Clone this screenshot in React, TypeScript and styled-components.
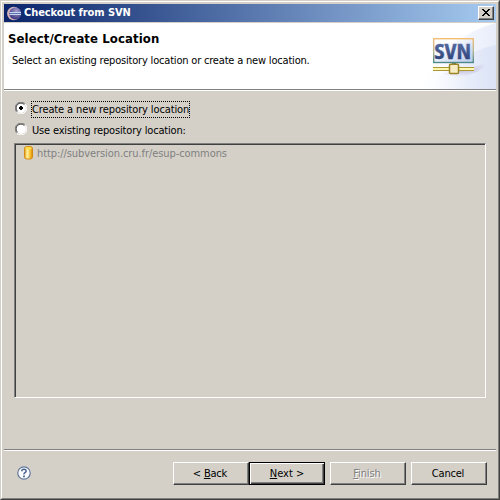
import React from 'react';
import styled, { createGlobalStyle, css } from 'styled-components';

const Global = createGlobalStyle`
  * { box-sizing: border-box; }
  html, body { margin: 0; padding: 0; }
  body {
    background: #d4d0c8;
    color: #000;
    font: 11px/14px "DejaVu Sans Condensed", "DejaVu Sans", Tahoma, sans-serif;
    font-stretch: condensed;
    overflow: hidden;
  }
  svg { display: block; flex: none; }
`;

const Window = styled.div`
  width: 500px;
  height: 500px;
  background: #d4d0c8;
  border: 1px solid;
  border-color: #d4d0c8 #404040 #404040 #d4d0c8;
`;

const Frame = styled.div`
  width: 498px;
  height: 498px;
  border: 1px solid;
  border-color: #fff #808080 #808080 #fff;
  padding: 2px;
  display: flex;
  flex-direction: column;
`;

const TitleBar = styled.div`
  height: 18px;
  flex: none;
  display: flex;
  align-items: center;
  padding: 0 2px;
  background: linear-gradient(to right, #0a246a, #a6caf0);
`;

const Text = styled.span<{ $spacing?: number }>`
  display: block;
  white-space: pre;
  letter-spacing: ${(p) => p.$spacing ?? 0}px;
`;

const Caption = styled(Text)`
  flex: 1;
  margin-left: 2px;
  color: #fff;
  font-weight: bold;
`;

const raised = css`
  border: 1px solid;
  border-color: #fff #404040 #404040 #fff;
  box-shadow: inset -1px -1px 0 #808080;
  background: #d4d0c8;
`;

const CloseButton = styled.button`
  ${raised}
  width: 16px;
  height: 14px;
  padding: 0 0 1px 3px;
`;

const Header = styled.header`
  height: 68px;
  margin-top: 1px;
  flex: none;
  display: flex;
  justify-content: space-between;
  background: #fff;
  border-bottom: 1px solid #fff;
  box-shadow: inset 0 -1px 0 #808080;
`;

const HeaderText = styled.div`
  padding: 8px 0 0 4px;
`;

const Heading = styled(Text)`
  font-size: 13px;
  line-height: 16px;
  font-weight: bold;
`;

const Description = styled(Text)`
  margin: 7px 0 0 4px;
`;

const Body = styled.main`
  flex: 1;
  padding: 10px 9px 0 10px;
`;

const Option = styled.div`
  height: 17px;
  display: flex;
  align-items: flex-start;
  margin-left: 1px;
  & + & { margin-top: 4px; }
  > svg { margin-top: 1px; }
`;

const OptionLabel = styled.div<{ $focused?: boolean }>`
  height: 17px;
  width: 159px;
  margin-left: 4px;
  padding: 1px 0 0;
  border: 1px dotted ${(p) => (p.$focused ? '#000' : 'transparent')};
`;

const List = styled.div`
  width: 472px;
  height: 255px;
  margin-top: 4px;
  border: 1px solid;
  border-color: #808080 #fff #fff #808080;
  box-shadow: inset 1px 1px 0 #404040;
  padding: 2px 0 0 9px;
`;

const ListItem = styled.div`
  display: flex;
  gap: 3px;
  color: #808080;
  > span { padding-top: 1px; }
`;

const Footer = styled.footer`
  height: 47px;
  flex: none;
  border-top: 1px solid #808080;
  box-shadow: inset 0 1px 0 #fff;
  display: flex;
  align-items: flex-start;
  padding: 12px 9px 0 13px;
`;

const HelpSlot = styled.div`
  flex: 1;
  padding-top: 4px;
`;

const Buttons = styled.div`
  display: flex;
`;

const Button = styled.button<{ $primary?: boolean; $gap?: number }>`
  ${raised}
  width: 76px;
  height: 23px;
  margin: 0 0 0 ${(p) => p.$gap ?? 0}px;
  padding: 0 2px 0 0;
  display: flex;
  justify-content: center;
  align-items: center;
  color: #000;
  font: inherit;
  font-stretch: inherit;
  u { text-underline-offset: 1px; text-decoration-thickness: 1px; text-decoration-skip-ink: none; }
  ${(p) => p.$primary && css`
    padding: 0;
    border-color: #000;
    box-shadow: inset 1px 1px 0 #fff, inset -1px -1px 0 #404040, inset -2px -2px 0 #808080;
  `}
  &:disabled { color: #808080; text-shadow: 1px 1px 0 #fff; }
`;

const EclipseIcon = () => (
  <svg width="16" height="15" viewBox="0 0 16 15">
    <defs>
      <radialGradient id="orb" cx="0.6" cy="0.3" r="0.75">
        <stop offset="0" stopColor="#a29cca" />
        <stop offset="0.6" stopColor="#625c9f" />
        <stop offset="1" stopColor="#342f76" />
      </radialGradient>
    </defs>
    <circle cx="7.8" cy="7.5" r="6.7" fill="#d3b3bb" />
    <circle cx="9.3" cy="7.5" r="6" fill="url(#orb)" />
    <path d="M3.5 6.5h11.5M3.5 8.5h11.5" stroke="#c9d8f0" />
    <path d="M4 7.5h11" stroke="#5c70b0" />
  </svg>
);

const Radio = ({ checked }: { checked?: boolean }) => (
  <svg width="12" height="12" viewBox="0 0 12 12">
    <circle cx="6" cy="6" r="5" fill="#fff" />
    <path d="M1.8 10.2A5.5 5.5 0 0 1 10.2 1.8" fill="none" stroke="#808080" />
    <path d="M2.5 9.3A4.6 4.6 0 0 1 9.3 2.5" fill="none" stroke="#404040" />
    <path d="M1.8 10.2A5.5 5.5 0 0 0 10.2 1.8" fill="none" stroke="#fff" />
    {checked && <path d="M5 4h2v1h1v2h-1v1h-2v-1h-1v-2h1z" fill="#000" />}
  </svg>
);

const RepoIcon = () => (
  <svg width="10" height="14" viewBox="0 0 10 14">
    <defs>
      <linearGradient id="gold">
        <stop offset="0" stopColor="#e79a12" />
        <stop offset="0.35" stopColor="#fff3a0" />
        <stop offset="0.7" stopColor="#f8c030" />
        <stop offset="1" stopColor="#d98808" />
      </linearGradient>
    </defs>
    <rect x="0.5" y="0.5" width="8" height="12.5" rx="2.2" fill="url(#gold)" stroke="#d08a14" />
    <ellipse cx="4.5" cy="2.3" rx="3.2" ry="1.3" fill="#ffe04a" />
  </svg>
);

const HelpIcon = () => (
  <svg width="14" height="14" viewBox="0 0 14 14">
    <circle cx="7" cy="7" r="6.2" fill="#fbfcff" stroke="#60779c" strokeWidth="1.2" />
    <path d="M4.8 5.3V4.6Q5 3.2 7 3.2T9.2 5Q9.2 6 8 6.7T7 8.4" fill="none" stroke="#48608c" strokeWidth="1.5" />
    <path d="M6.1 9.6h1.8v1.6h-1.8z" fill="#48608c" />
  </svg>
);

const SvnBanner = () => (
  <svg width="75" height="66" viewBox="421 23 75 66">
    <defs>
      <linearGradient id="sky">
        <stop offset="0" stopColor="#fff" />
        <stop offset="0.5" stopColor="#f7f9fe" />
        <stop offset="1" stopColor="#e8edfa" />
      </linearGradient>
      <linearGradient id="haze">
        <stop offset="0" stopColor="#e6ebf9" stopOpacity="0" />
        <stop offset="1" stopColor="#dbe3f6" />
      </linearGradient>
      <linearGradient id="panel" x1="0" y1="0" x2="1" y2="1">
        <stop offset="0.25" stopColor="#fff" />
        <stop offset="1" stopColor="#b7c9ec" />
      </linearGradient>
      <linearGradient id="edge" x1="0" y1="0" x2="0" y2="1">
        <stop offset="0" stopColor="#f3bd72" />
        <stop offset="0.5" stopColor="#b8b895" />
        <stop offset="1" stopColor="#4f8888" />
      </linearGradient>
      <linearGradient id="ink" x1="0" y1="0" x2="0" y2="1">
        <stop offset="0" stopColor="#6179ae" />
        <stop offset="1" stopColor="#24376f" />
      </linearGradient>
      <radialGradient id="shade">
        <stop offset="0" stopColor="#b6accd" stopOpacity="0.9" />
        <stop offset="1" stopColor="#c8c4e0" stopOpacity="0" />
      </radialGradient>
    </defs>
    <path d="M421 89C436 55 462 31 496 23V89z" fill="url(#sky)" />
    <path d="M432 89C440 70 466 51 496 45V89z" fill="url(#haze)" />
    <path d="M433 76L474 67L491 61L477 72L464 77z" fill="url(#shade)" />
    <rect x="433.7" y="38.7" width="39.6" height="23.8" fill="url(#panel)" stroke="url(#edge)" strokeWidth="1.4" />
    <text x="434.2" y="59" textLength="37" lengthAdjust="spacingAndGlyphs" fontFamily="Open Sans, Noto Sans, sans-serif" fontWeight="700" fontSize="20.5" fill="url(#ink)" stroke="url(#ink)" strokeWidth="0.3">SVN</text>
    <path d="M433 67.5h41M433 70.5h41" stroke="#a9982f" />
    <path d="M433 69h41" stroke="#fff7b0" strokeWidth="2" />
    <path d="M452 63.5h4" stroke="#567f80" />
    <rect x="449.5" y="64.3" width="9" height="9.2" rx="1" fill="#f7edc4" stroke="#9c8222" strokeWidth="1.5" />
  </svg>
);

export default function App() {
  return (
    <>
      <Global />
      <Window>
        <Frame>
          <TitleBar>
            <EclipseIcon />
            <Caption $spacing={-0.07}>Checkout from SVN</Caption>
            <CloseButton aria-label="Close">
              <svg width="8" height="7" viewBox="0 0 8 7" shapeRendering="crispEdges">
                <path d="M0 0h2v1h1v1h2v-1h1v-1h2v1h-1v1h-1v1h-1v1h1v1h1v1h1v1h-2v-1h-1v-1h-2v1h-1v1h-2v-1h1v-1h1v-1h1v-1h-1v-1h-1v-1h-1z" fill="#000" />
              </svg>
            </CloseButton>
          </TitleBar>
          <Header>
            <HeaderText>
              <Heading $spacing={0.1}>Select/Create Location</Heading>
              <Description $spacing={-0.19}>Select an existing repository location or create a new location.</Description>
            </HeaderText>
            <SvnBanner />
          </Header>
          <Body>
            <Option>
              <Radio checked />
              <OptionLabel $focused>
                <Text $spacing={-0.13}>Create a new repository location</Text>
              </OptionLabel>
            </Option>
            <Option>
              <Radio />
              <OptionLabel>
                <Text $spacing={-0.17}>Use existing repository location:</Text>
              </OptionLabel>
            </Option>
            <List>
              <ListItem>
                <RepoIcon />
                <Text $spacing={-0.08}>http://subversion.cru.fr/esup-commons</Text>
              </ListItem>
            </List>
          </Body>
          <Footer>
            <HelpSlot><HelpIcon /></HelpSlot>
            <Buttons>
              <Button><Text $spacing={-0.2}>{'< '}<u>B</u>ack</Text></Button>
              <Button $primary><Text><u>N</u>{'ext >'}</Text></Button>
              <Button disabled $gap={5}><Text $spacing={-0.1}><u>F</u>inish</Text></Button>
              <Button $gap={5}><Text $spacing={-0.2}>Cancel</Text></Button>
            </Buttons>
          </Footer>
        </Frame>
      </Window>
    </>
  );
}
